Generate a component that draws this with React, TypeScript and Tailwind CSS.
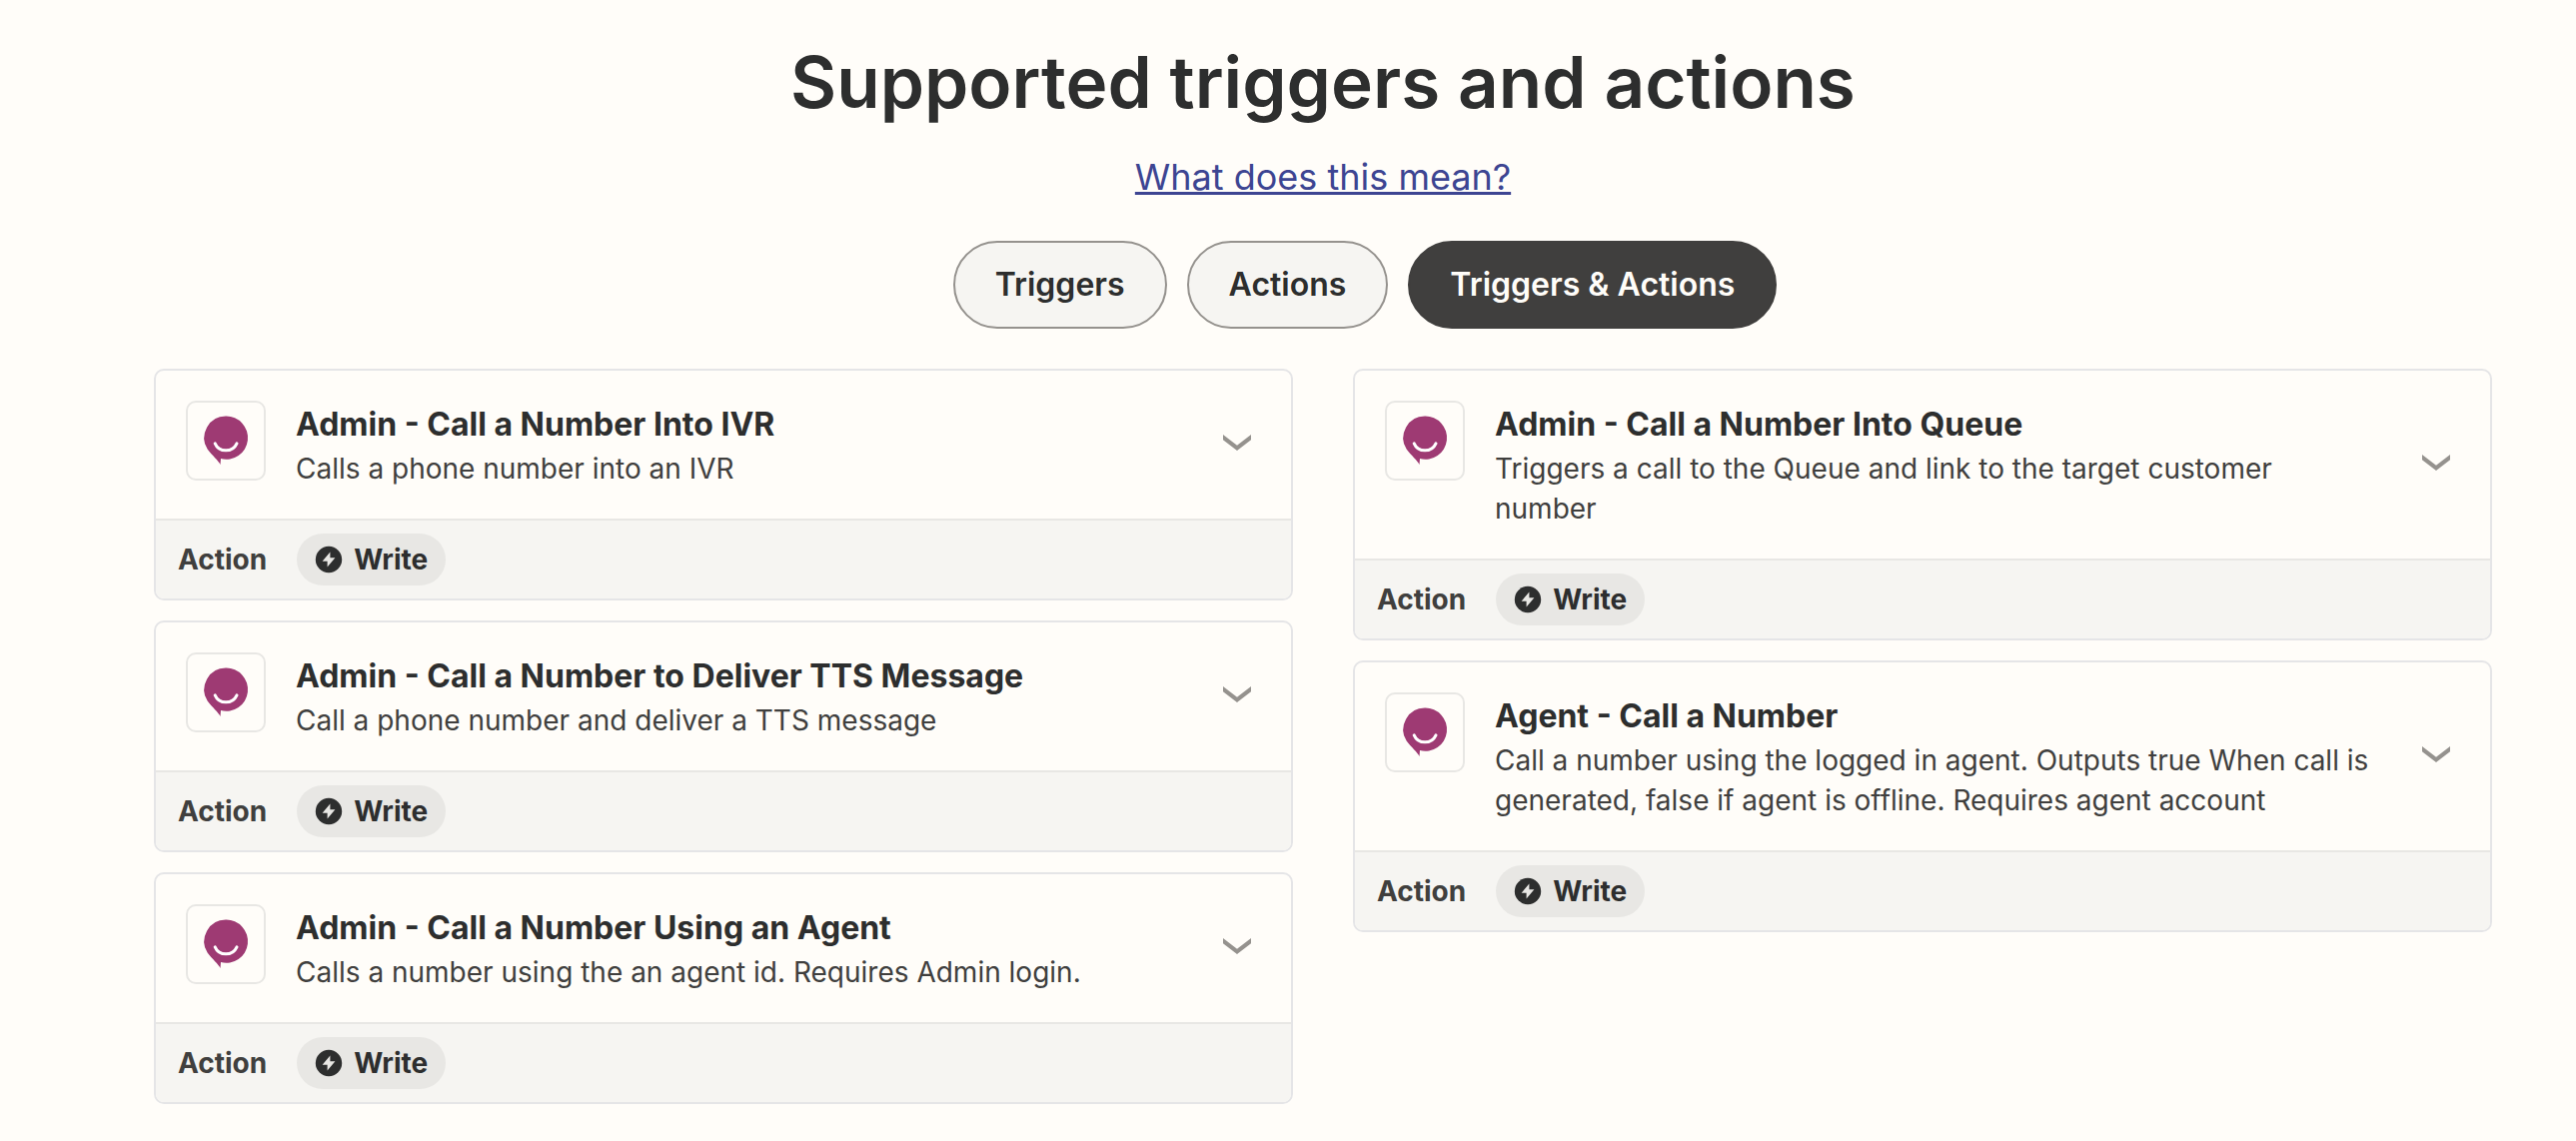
import { useState } from "react";

type Item = {
  id: string;
  title: string;
  description: string;
};

const leftItems: Item[] = [
  {
    id: "ivr",
    title: "Admin - Call a Number Into IVR",
    description: "Calls a phone number into an IVR",
  },
  {
    id: "tts",
    title: "Admin - Call a Number to Deliver TTS Message",
    description: "Call a phone number and deliver a TTS message",
  },
  {
    id: "agent",
    title: "Admin - Call a Number Using an Agent",
    description: "Calls a number using the an agent id. Requires Admin login.",
  },
];

const rightItems: Item[] = [
  {
    id: "queue",
    title: "Admin - Call a Number Into Queue",
    description:
      "Triggers a call to the Queue and link to the target customer number",
  },
  {
    id: "agent-call",
    title: "Agent - Call a Number",
    description:
      "Call a number using the logged in agent. Outputs true When call is generated, false if agent is offline. Requires agent account",
  },
];

const filters = ["Triggers", "Actions", "Triggers & Actions"];

function AppLogo() {
  return (
    <svg viewBox="0 0 76 76" className="size-full" aria-hidden="true">
      <path
        d="M38 13.6a21.6 21.6 0 1 1-5 42.5l-.5 5.9C31 58.6 24 52.5 19.6 46.6A21.6 21.6 0 0 1 38 13.6Z"
        fill="#9e3a73"
      />
      <path
        d="M27.2 40.8c4 9.4 17.6 9.4 21.8 0"
        fill="none"
        stroke="#fff"
        strokeWidth="3"
        strokeLinecap="round"
      />
    </svg>
  );
}

function Chevron() {
  return (
    <svg viewBox="0 0 48 48" className="size-12" aria-hidden="true">
      <path d="M10 14v5.2L24 30l14-10.8V14L24 24.8Z" fill="#95928e" />
    </svg>
  );
}

function BoltIcon() {
  return (
    <svg viewBox="0 0 28 28" className="size-7" aria-hidden="true">
      <circle cx="14" cy="14" r="13.2" fill="#2d2e2e" />
      <path d="M15.4 6.4 7.6 15.8h5v5.8l7.8-9.4h-5Z" fill="#e8e7e4" />
    </svg>
  );
}

function Card({ item }: { item: Item }) {
  return (
    <li className="overflow-hidden rounded-[10px] border-2 border-[#e5e5e7]">
      <button
        type="button"
        aria-expanded="false"
        className="flex w-full cursor-pointer items-center gap-[30px] p-[30px] text-left"
      >
        <span className="size-20 shrink-0 self-start rounded-[10px] border-2 border-[#e8e7e4]">
          <AppLogo />
        </span>
        <span className="flex-1 pr-2">
          <span className="block text-[32px] leading-12 font-bold text-[#2d2e2e]">
            {item.title}
          </span>
          <span className="block text-[28px] leading-10 text-[#403f3e]">
            {item.description}
          </span>
        </span>
        <Chevron />
      </button>
      <div className="flex items-center gap-[30px] border-t-2 border-[#e8e7e4] bg-[#f6f5f2] px-[22px] py-[13px] text-[28px] leading-[52px] font-bold">
        <span className="text-[#403f3e]">Action</span>
        <span className="flex items-center gap-[11px] rounded-full bg-[#e8e7e4] px-[18px] text-[#2d2e2e]">
          <BoltIcon />
          Write
        </span>
      </div>
    </li>
  );
}

export default function App() {
  const [active, setActive] = useState("Triggers & Actions");

  return (
    <main className="min-h-screen bg-[#fffdf9] pt-[42px] pr-[84px] pb-[37px] pl-[154px] font-['Inter',sans-serif]">
      <header className="flex flex-col items-center">
        <h1 className="text-[71px] leading-20 font-semibold text-[#2d2e2e]">
          Supported triggers and actions
        </h1>
        <a
          href="#help"
          className="mt-7 text-[36px] leading-[54px] text-[#3d4592] underline decoration-3"
        >
          What does this mean?
        </a>
        <div className="mt-[37px] flex gap-5 pl-[84px]">
          {filters.map((filter) => (
            <button
              key={filter}
              type="button"
              aria-pressed={filter === active}
              onClick={() => setActive(filter)}
              className={
                filter === active
                  ? "h-[88px] cursor-pointer rounded-full border-2 border-[#403f3e] bg-[#403f3e] px-10 text-[32px] font-semibold text-[#fffdf9]"
                  : "h-[88px] cursor-pointer rounded-full border-2 border-[#95928e] bg-[#f6f5f2] px-10 text-[32px] font-semibold text-[#2d2e2e]"
              }
            >
              {filter}
            </button>
          ))}
        </div>
      </header>

      <div className="mt-10 grid grid-cols-2 items-start gap-[60px]">
        <ul className="flex flex-col gap-5">
          {leftItems.map((item) => (
            <Card key={item.id} item={item} />
          ))}
        </ul>
        <ul className="flex flex-col gap-5">
          {rightItems.map((item) => (
            <Card key={item.id} item={item} />
          ))}
        </ul>
      </div>
    </main>
  );
}
